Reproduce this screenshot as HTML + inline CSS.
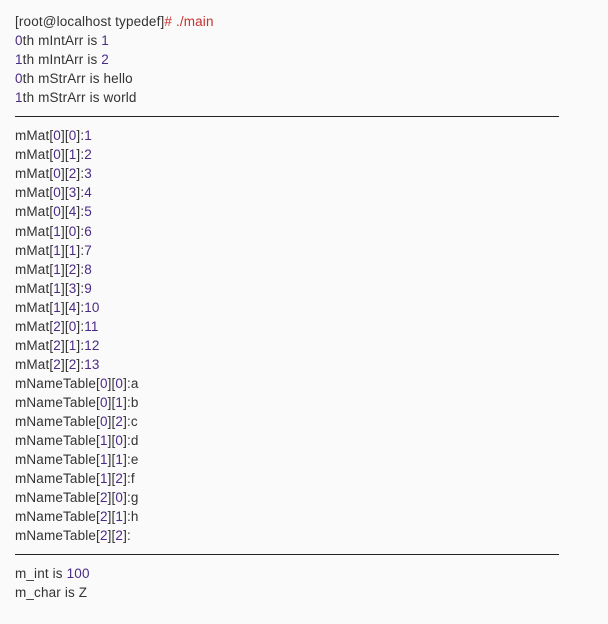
<html><head><style>
body{margin:0;background:#fafafa;width:608px;height:624px;overflow:hidden}
.w{position:absolute;left:15px;top:12px;font:13.5px/19.05px "Liberation Sans",sans-serif;color:#333;letter-spacing:0.15px}
.w div{height:19.05px;white-space:nowrap}
b{font-weight:normal;color:#4a2b86}
i{font-style:normal;color:#c7312f}
.hr{position:relative}
.hr:after{content:"";position:absolute;left:0;width:544px;top:9px;border-top:1px solid #222}
</style></head><body><div class="w">
<div>[root@localhost typedef]<i># ./main</i></div>
<div><b>0</b>th mIntArr is <b>1</b></div>
<div><b>1</b>th mIntArr is <b>2</b></div>
<div><b>0</b>th mStrArr is hello</div>
<div><b>1</b>th mStrArr is world</div>
<div class="hr"></div>
<div>mMat[<b>0</b>][<b>0</b>]:<b>1</b></div>
<div>mMat[<b>0</b>][<b>1</b>]:<b>2</b></div>
<div>mMat[<b>0</b>][<b>2</b>]:<b>3</b></div>
<div>mMat[<b>0</b>][<b>3</b>]:<b>4</b></div>
<div>mMat[<b>0</b>][<b>4</b>]:<b>5</b></div>
<div>mMat[<b>1</b>][<b>0</b>]:<b>6</b></div>
<div>mMat[<b>1</b>][<b>1</b>]:<b>7</b></div>
<div>mMat[<b>1</b>][<b>2</b>]:<b>8</b></div>
<div>mMat[<b>1</b>][<b>3</b>]:<b>9</b></div>
<div>mMat[<b>1</b>][<b>4</b>]:<b>10</b></div>
<div>mMat[<b>2</b>][<b>0</b>]:<b>11</b></div>
<div>mMat[<b>2</b>][<b>1</b>]:<b>12</b></div>
<div>mMat[<b>2</b>][<b>2</b>]:<b>13</b></div>
<div>mNameTable[<b>0</b>][<b>0</b>]:a</div>
<div>mNameTable[<b>0</b>][<b>1</b>]:b</div>
<div>mNameTable[<b>0</b>][<b>2</b>]:c</div>
<div>mNameTable[<b>1</b>][<b>0</b>]:d</div>
<div>mNameTable[<b>1</b>][<b>1</b>]:e</div>
<div>mNameTable[<b>1</b>][<b>2</b>]:f</div>
<div>mNameTable[<b>2</b>][<b>0</b>]:g</div>
<div>mNameTable[<b>2</b>][<b>1</b>]:h</div>
<div>mNameTable[<b>2</b>][<b>2</b>]:</div>
<div class="hr"></div>
<div>m_int is <b>100</b></div>
<div>m_char is Z</div>
</div></body></html>
